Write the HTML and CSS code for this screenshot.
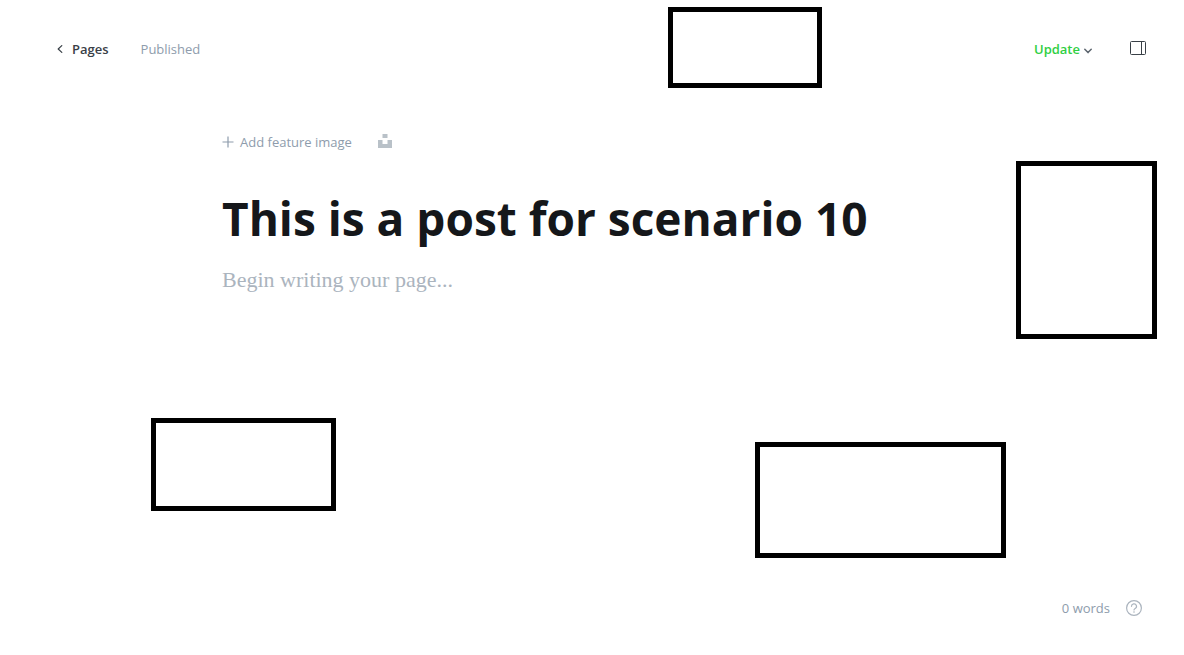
FILE: index.html
```
<!DOCTYPE html>
<html lang="en">
<head>
<meta charset="utf-8">
<meta name="viewport" content="width=device-width, initial-scale=1">
<title>This is a post for scenario 10</title>
<link rel="stylesheet" href="styles.css">
</head>
<body class="editor">
<header class="toolbar">
  <nav class="toolbar-group">
    <a class="back" href="#pages">
      <svg width="6" height="8" viewBox="0 0 6 8" fill="none" stroke="currentColor" stroke-width="1.2" stroke-linecap="round" stroke-linejoin="round" aria-hidden="true"><path d="M4.8.6 1.2 4l3.6 3.4"/></svg>
      <span>Pages</span>
    </a>
    <span class="status">Published</span>
  </nav>
  <div class="toolbar-group">
    <button class="update" type="button">
      <span>Update</span>
      <svg class="chevron" width="8" height="6" viewBox="0 0 8 6" fill="none" stroke="currentColor" stroke-width="1.5" stroke-linecap="round" stroke-linejoin="round" aria-hidden="true"><path d="M.8 1.2 4 4.6l3.2-3.4"/></svg>
    </button>
    <button class="settings" type="button" aria-label="Settings">
      <svg width="16" height="14" viewBox="0 0 16 14" fill="none" stroke="currentColor" aria-hidden="true"><rect x=".5" y=".5" width="15" height="13" rx="1"/><path d="M11.500.5v13"/></svg>
    </button>
  </div>
</header>
<main class="canvas">
  <div class="feature">
    <button class="add-image" type="button">
      <svg width="12" height="12" viewBox="0 0 12 12" fill="none" stroke="currentColor" stroke-width="1.2" aria-hidden="true"><path d="M6 .5v11M.5 6h11"/></svg>
      <span>Add feature image</span>
    </button>
    <button class="unsplash" type="button" aria-label="Choose from Unsplash">
      <svg width="14" height="14" viewBox="0 0 14 14" fill="currentColor" aria-hidden="true"><path d="M4.500 0h5v4h-5zM0 6h4.500v4h5V6H14v8H0z"/></svg>
    </button>
  </div>
  <input class="title" type="text" aria-label="Page title" value="This is a post for scenario 10">
  <textarea class="content" rows="1" aria-label="Page content" placeholder="Begin writing your page..."></textarea>
</main>
<footer class="footer">
  <span>0 words</span>
  <a class="help" href="#help" aria-label="Help">
    <svg width="16" height="16" viewBox="0 0 16 16" fill="none" stroke="currentColor" stroke-width="1.2" aria-hidden="true"><circle cx="8" cy="8" r="7.400"/><path d="M5.500 6.300a2.500 2.500 0 1 1 3.700 2.200C8.300 9 8 9.300 8 10" stroke-linecap="round"/><circle cx="8" cy="12" r=".8" fill="currentColor" stroke="none"/></svg>
  </a>
</footer>
<div class="frame frame-top"></div>
<div class="frame frame-right"></div>
<div class="frame frame-left"></div>
<div class="frame frame-bottom"></div>
</body>
</html>
```

FILE: styles.css
```
* {
  box-sizing: border-box;
}

.editor {
  position: relative;
  display: flex;
  flex-direction: column;
  min-height: 100vh;
  margin: 0;
  background: #fff;
  color: #8e9cac;
  font: 13px/20px "Segoe UI", "Open Sans", "Noto Sans", sans-serif;
}

button,
input,
textarea {
  padding: 0;
  border: 0;
  outline: 0;
  background: none;
  color: inherit;
  font: inherit;
}

svg {
  display: block;
  flex: none;
}

.toolbar {
  display: flex;
  justify-content: space-between;
  padding: 39px 38px 0 57px;
}

.toolbar-group,
.back,
.update,
.feature,
.add-image,
.footer {
  display: flex;
  align-items: center;
}

.toolbar-group {
  gap: 32px;
}

.back {
  gap: 9px;
  color: #394047;
  font-weight: 600;
  text-decoration: none;
}

.update {
  gap: 4px;
  color: #30cf43;
  font-weight: 600;
}

.chevron {
  margin-top: 4px;
  color: #5d666f;
}

.settings {
  padding: 0 0 2px 6px;
  color: #394047;
}

.canvas {
  display: flex;
  flex: 1;
  flex-direction: column;
  width: 100%;
  max-width: 740px;
  margin: 0 auto;
  padding-top: 73px;
}

.feature {
  gap: 26px;
}

.add-image {
  gap: 6px;
}

.unsplash {
  padding-bottom: 2px;
  color: #b9c1c8;
}

.title {
  width: 100%;
  margin-top: 36px;
  color: #15171a;
  font-size: 46px;
  font-weight: 700;
  line-height: 60px;
}

.content {
  width: 100%;
  margin-top: 16px;
  resize: none;
  overflow: hidden;
  color: #15171a;
  font-family: Georgia, "Liberation Serif", serif;
  font-size: 22px;
  line-height: 32px;
}

.content::placeholder {
  color: #abb4be;
  opacity: 1;
}

.footer {
  justify-content: flex-end;
  gap: 16px;
  padding: 0 42px 37px;
}

.help {
  color: #abb4be;
}

.frame {
  position: absolute;
  border: 5px solid #000;
  pointer-events: none;
}

.frame-top {
  top: 7px;
  left: 668px;
  width: 154px;
  height: 81px;
}

.frame-right {
  top: 161px;
  left: 1016px;
  width: 141px;
  height: 178px;
}

.frame-left {
  top: 418px;
  left: 151px;
  width: 185px;
  height: 93px;
}

.frame-bottom {
  top: 442px;
  left: 755px;
  width: 251px;
  height: 116px;
}
```
